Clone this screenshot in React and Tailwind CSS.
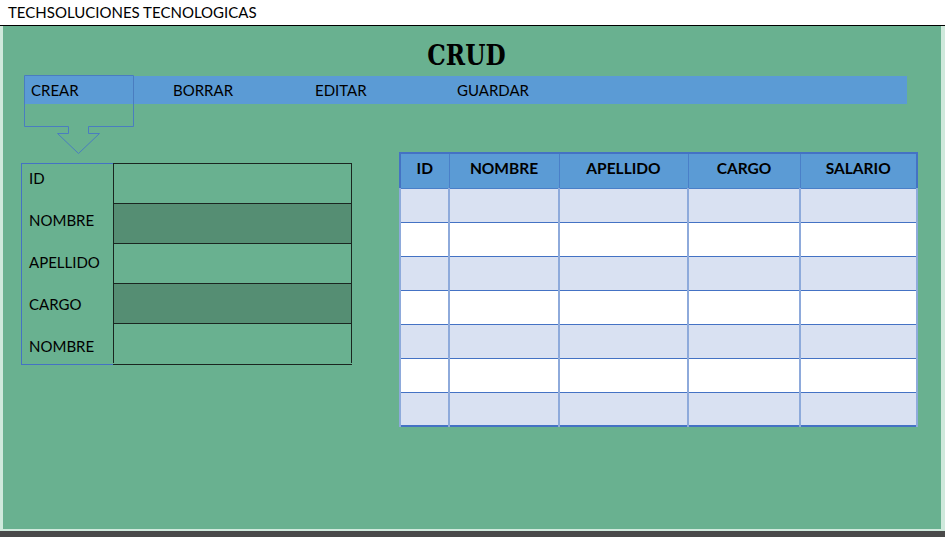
const fields = ['ID', 'NOMBRE', 'APELLIDO', 'CARGO', 'NOMBRE']
const menu = ['CREAR', 'BORRAR', 'EDITAR', 'GUARDAR']
const cols = [
  { name: 'ID', w: 'w-[49px]' },
  { name: 'NOMBRE', w: 'w-[110px]' },
  { name: 'APELLIDO', w: 'w-[129px]' },
  { name: 'CARGO', w: 'w-[112px]' },
  { name: 'SALARIO', w: 'w-[117px]' },
]
const rows = [0, 1, 2, 3, 4, 5, 6]

const App = () => {
  return (
    <div className="w-[945px] h-[537px] flex flex-col bg-[#4a4a4a] overflow-hidden" style={{ fontFamily: 'Lato, "Open Sans", sans-serif' }}>
      {/* title bar */}
      <div className="h-[26px] shrink-0 bg-white border-b border-black flex items-center pl-[8px] text-[15px] text-black">
        TECHSOLUCIONES TECNOLOGICAS
      </div>

      {/* sheet */}
      <div className="h-[505px] shrink-0 bg-[#69b190] border-l-[3px] border-l-[#cfe9dc] border-r-[4px] border-r-[#cfe9dc] border-b-[2px] border-b-[#cfe9dc] flex flex-col">
        <div className="text-center pr-[12px] pt-[14px] h-[50px] leading-[32px]">
          <span className="inline-block scale-x-[0.86] text-[27px] font-bold text-black" style={{ fontFamily: '"DejaVu Serif", "Liberation Serif", serif' }}>
            CRUD
          </span>
        </div>

        {/* menu */}
        <div className="relative ml-[22px] w-[882px] h-[28px] bg-[#5b9bd5] flex items-center text-[15px] text-black">
          {menu.map((m) => (
            <div key={m} className="w-[142px] pl-[6px]">{m}</div>
          ))}
          <svg className="absolute left-[-1px] top-[-1px]" width="112" height="80" viewBox="0 0 112 80">
            <path
              d="M0.5 0.5 H109.5 V51.5 H64.5 V58.5 H75.5 L54.5 78.5 L33.5 58.5 H44.5 V51.5 H0.5 Z"
              fill="none"
              stroke="#4a7dc0"
              strokeWidth="1"
            />
          </svg>
        </div>

        {/* content */}
        <div className="flex items-start mt-[48px]">
          {/* form */}
          <div className="ml-[18px] mt-[11px] flex">
            <div className="w-[92px] h-[202px] border border-[#4472c4] border-r-0 flex flex-col text-[15px] text-black">
              {fields.map((f, i) => (
                <div key={i} className="h-[42px] shrink-0 pl-[7px] pt-[5px] leading-[18px]">{f}</div>
              ))}
            </div>
            <div className="w-[239px] flex flex-col border-b border-[#1a2620]">
              {fields.map((f, i) => (
                <div
                  key={i}
                  className={`h-[40px] border-x border-t border-[#1a2620] ${i % 2 === 1 ? 'bg-[#558e73]' : 'bg-[#69b190]'}`}
                />
              ))}
            </div>
          </div>

          {/* table */}
          <table className="ml-[47px] border-collapse border-2 border-[#4472c4] text-[15.5px] text-black">
            <thead>
              <tr className="h-[35px] bg-[#5b9bd5]">
                {cols.map((c) => (
                  <th key={c.name} className={`${c.w} border border-[#4a7fc8] font-bold text-center p-0 pb-[4px]`}>{c.name}</th>
                ))}
              </tr>
            </thead>
            <tbody>
              {rows.map((r) => (
                <tr key={r} className={`h-[34px] ${r % 2 === 0 ? 'bg-[#d9e1f2]' : 'bg-white'}`}>
                  {cols.map((c) => (
                    <td key={c.name} className="border-x-2 border-x-[#8eaadb] border-y border-y-[#4472c4] p-0" />
                  ))}
                </tr>
              ))}
            </tbody>
          </table>
        </div>
      </div>

      <div className="flex-1 bg-[#4a4a4a]" />
    </div>
  )
}

export default App
